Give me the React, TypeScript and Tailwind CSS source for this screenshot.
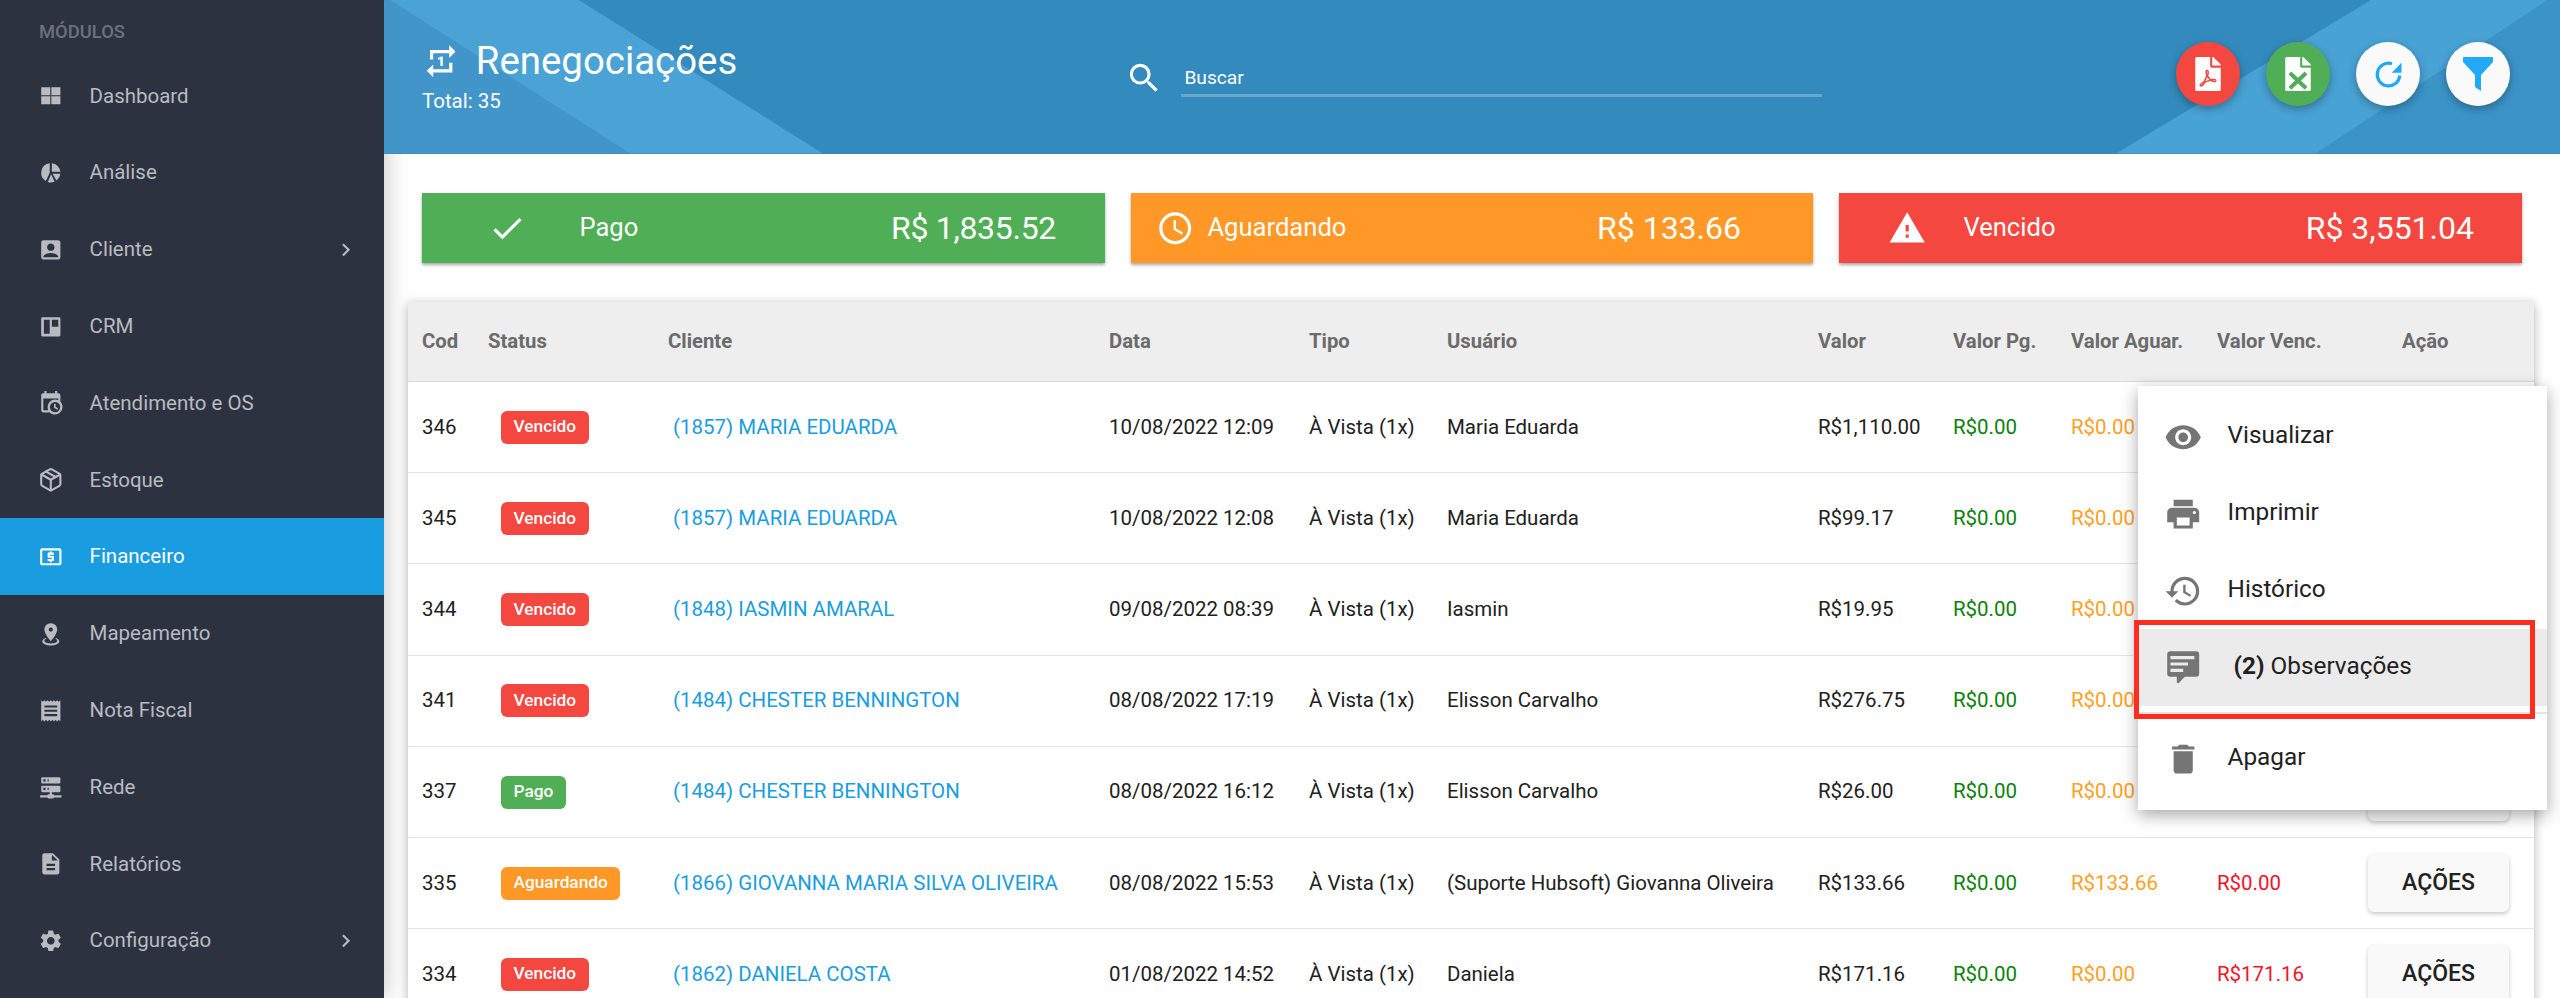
import { Package } from 'lucide-react';
import { FaFilePdf } from 'react-icons/fa';
import {
  MdAccessTime,
  MdAccountBox,
  MdCheck,
  MdChevronRight,
  MdDelete,
  MdDescription,
  MdHistory,
  MdLocalAtm,
  MdPrint,
  MdReceipt,
  MdRepeatOne,
  MdSearch,
  MdSettings,
  MdVisibility,
  MdWarning,
} from 'react-icons/md';
import type { ReactNode } from 'react';

const Svg = ({ d, className, evenOdd }: { d: string; className?: string; evenOdd?: boolean }) => (
  <svg viewBox="0 0 24 24" className={className} fill="currentColor">
    <path d={d} fillRule={evenOdd ? 'evenodd' : 'nonzero'} />
  </svg>
);

const navIcon = 'w-[25.6px] h-[25.6px] shrink-0';

const nav: { label: string; icon: ReactNode; arrow?: boolean; active?: boolean }[] = [
  { label: 'Dashboard', icon: <Svg className={navIcon} d="M3 4h8.5v7.5H3z M12.5 4H21v7.5h-8.5z M3 12.5h8.5V20H3z M12.5 12.5H21V20h-8.5z" /> },
  { label: 'Análise', icon: <Svg className={navIcon} d="M13 3.05V11h7.95A9 9 0 0 0 13 3.05z M11 3.05A9 9 0 0 0 7.4 19.7L11 12z M9.2 20.6a9 9 0 0 0 6.4-.3L12.3 13.3z M17.2 19.3A9 9 0 0 0 20.9 13h-7.2z" /> },
  { label: 'Cliente', icon: <MdAccountBox className={navIcon} />, arrow: true },
  { label: 'CRM', icon: <Svg className={navIcon} evenOdd d="M4 3h16a1 1 0 0 1 1 1v16a1 1 0 0 1-1 1H4a1 1 0 0 1-1-1V4a1 1 0 0 1 1-1z M5.5 5.5v13H11v-13z M13 5.5V12h6V5.5z" /> },
  { label: 'Atendimento e OS', icon: <Svg className={navIcon} d="M15,13H16.5V15.82L18.94,17.23L18.19,18.53L15,16.69V13M19,8H5V19H9.67C9.24,18.09 9,17.07 9,16A7,7 0 0,1 16,9C17.07,9 18.09,9.24 19,9.67V8M5,21C3.89,21 3,20.1 3,19V5C3,3.89 3.89,3 5,3H6V1H8V3H16V1H18V3H19A2,2 0 0,1 21,5V11.1C22.24,12.36 23,14.09 23,16A7,7 0 0,1 16,23C14.09,23 12.36,22.24 11.1,21H5M16,11.15A4.85,4.85 0 0,0 11.15,16C11.15,18.68 13.32,20.85 16,20.85A4.85,4.85 0 0,0 20.85,16C20.85,13.32 18.68,11.15 16,11.15Z" /> },
  { label: 'Estoque', icon: <Package className={navIcon} strokeWidth={2} /> },
  { label: 'Financeiro', icon: <MdLocalAtm className={navIcon} />, active: true },
  { label: 'Mapeamento', icon: <Svg className={navIcon} d="M12,2C15.31,2 18,4.66 18,7.95C18,12.41 12,19 12,19C12,19 6,12.41 6,7.95C6,4.66 8.69,2 12,2M12,6A2,2 0 0,0 10,8A2,2 0 0,0 12,10A2,2 0 0,0 14,8A2,2 0 0,0 12,6M20,19C20,21.21 16.42,23 12,23C7.58,23 4,21.21 4,19C4,17.71 5.22,16.56 7.11,15.83L7.75,16.74C6.67,17.19 6,17.81 6,18.5C6,19.88 8.69,21 12,21C15.31,21 18,19.88 18,18.5C18,17.81 17.33,17.19 16.25,16.74L16.89,15.83C18.78,16.56 20,17.71 20,19Z" /> },
  { label: 'Nota Fiscal', icon: <MdReceipt className={navIcon} /> },
  { label: 'Rede', icon: <Svg className={navIcon} d="M13,19H14A1,1 0 0,1 15,20H22V22H15A1,1 0 0,1 14,23H10A1,1 0 0,1 9,22H2V20H9A1,1 0 0,1 10,19H11V17H4A1,1 0 0,1 3,16V12A1,1 0 0,1 4,11H20A1,1 0 0,1 21,12V16A1,1 0 0,1 20,17H13V19M4,3H20A1,1 0 0,1 21,4V8A1,1 0 0,1 20,9H4A1,1 0 0,1 3,8V4A1,1 0 0,1 4,3M9,7H10V5H9V7M9,15H10V13H9V15M5,5V7H7V5H5M5,13V15H7V13H5Z" /> },
  { label: 'Relatórios', icon: <MdDescription className={navIcon} /> },
  { label: 'Configuração', icon: <MdSettings className={navIcon} />, arrow: true },
];

const statusColor: Record<string, string> = {
  Vencido: 'bg-[#f44740]',
  Pago: 'bg-[#50ae57]',
  Aguardando: 'bg-[#ff9826]',
};

const rows = [
  ['346', 'Vencido', '(1857) MARIA EDUARDA', '10/08/2022 12:09', 'Maria Eduarda', 'R$1,110.00', 'R$0.00', 'R$1,110.00'],
  ['345', 'Vencido', '(1857) MARIA EDUARDA', '10/08/2022 12:08', 'Maria Eduarda', 'R$99.17', 'R$0.00', 'R$99.17'],
  ['344', 'Vencido', '(1848) IASMIN AMARAL', '09/08/2022 08:39', 'Iasmin', 'R$19.95', 'R$0.00', 'R$19.95'],
  ['341', 'Vencido', '(1484) CHESTER BENNINGTON', '08/08/2022 17:19', 'Elisson Carvalho', 'R$276.75', 'R$0.00', 'R$276.75'],
  ['337', 'Pago', '(1484) CHESTER BENNINGTON', '08/08/2022 16:12', 'Elisson Carvalho', 'R$26.00', 'R$0.00', 'R$0.00'],
  ['335', 'Aguardando', '(1866) GIOVANNA MARIA SILVA OLIVEIRA', '08/08/2022 15:53', '(Suporte Hubsoft) Giovanna Oliveira', 'R$133.66', 'R$133.66', 'R$0.00'],
  ['334', 'Vencido', '(1862) DANIELA COSTA', '01/08/2022 14:52', 'Daniela', 'R$171.16', 'R$0.00', 'R$171.16'],
];

const cols = 'grid grid-cols-[66px_180px_441px_200px_138px_371px_135px_118px_146px_151px_1fr] pl-[14px]';
const menuIcon = 'w-[38.4px] h-[38.4px] text-[#757575] shrink-0';

const menu: { label: ReactNode; icon: ReactNode; active?: boolean }[] = [
  { label: 'Visualizar', icon: <MdVisibility className={menuIcon} /> },
  { label: 'Imprimir', icon: <MdPrint className={menuIcon} /> },
  { label: 'Histórico', icon: <MdHistory className={menuIcon} /> },
  {
    label: <span className="pl-[6px]"><b className="font-bold">(2)</b> Observações</span>,
    icon: <Svg className={menuIcon} evenOdd d="M4 2h16a2 2 0 0 1 2 2v12a2 2 0 0 1-2 2h-7l-3.6 3.7a.8.8 0 0 1-1.4-.6V18H4a2 2 0 0 1-2-2V4a2 2 0 0 1 2-2z M4 5v2h15V5z M4 9v2h11V9z M4 13v2h8v-2z" />,
    active: true,
  },
];

const App = () => {
  return (
    <div className="relative flex h-screen overflow-hidden bg-white font-['Roboto',sans-serif] text-[#212121]">
      {/* Sidebar */}
      <aside className="relative z-[1] w-[384px] shrink-0 bg-[#2d3240] text-[#b9bbc0] shadow-[0_0_24px_rgba(0,0,0,0.25)]">
        <div className="h-[57.6px] pl-[39px] pt-[20px] text-[18.4px] font-medium leading-[24px] text-[#6e717b]">MÓDULOS</div>
        {nav.map((item) => (
          <div
            key={item.label}
            className={`flex h-[76.8px] items-center pl-[38.4px] pr-[25px] ${item.active ? 'bg-[#1a9de0] text-white' : ''}`}
          >
            {item.icon}
            <span className="ml-[25.6px] flex-1 text-[20.48px]">{item.label}</span>
            {item.arrow && <MdChevronRight className="h-[25.6px] w-[25.6px]" />}
          </div>
        ))}
      </aside>

      <div className="flex min-w-0 flex-1 flex-col">
        {/* Header */}
        <header className="relative z-[2] flex h-[153.6px] shrink-0 items-start overflow-hidden bg-[#338abc] pl-[38px] text-white">
          <svg className="absolute inset-0 h-full w-full" viewBox="0 0 2176 154" preserveAspectRatio="none">
            <polygon points="0,0 6,0 246,154 0,154" fill="#4195c9" />
            <polygon points="6,0 195,0 439,154 246,154" fill="#4aa3d4" />
            <polygon points="1987,0 2164,0 1932,154 1732,154" fill="#48a2d3" />
            <polygon points="2164,0 2176,0 2176,154 1932,154" fill="#3b93c6" />
          </svg>
          <div className="relative w-[703px] pt-[41px]">
            <div className="flex h-[40px] items-center">
              <MdRepeatOne className="h-[38.4px] w-[38.4px]" />
              <h1 className="ml-[15.4px] text-[38.4px] leading-none">Renegociações</h1>
            </div>
            <div className="mt-[8px] text-[20.48px] leading-[24px]">Total: 35</div>
          </div>
          <div className="relative mt-[58px] flex items-start">
            <MdSearch className="mt-[1px] h-[38.4px] w-[38.4px]" />
            <div className="ml-[18px] h-[39px] w-[641px] border-b-[3.2px] border-white/25 pl-[3px] text-[19.2px] leading-[39px]">Buscar</div>
          </div>
          <div className="relative ml-[354px] mt-[42px] flex gap-[26px]">
            <button className="flex h-[64px] w-[64px] items-center justify-center rounded-full bg-[#f44740] text-white shadow-[0_3px_8px_rgba(0,0,0,0.3)]">
              <FaFilePdf className="h-[34px] w-[26px]" />
            </button>
            <button className="flex h-[64px] w-[64px] items-center justify-center rounded-full bg-[#50ae57] text-white shadow-[0_3px_8px_rgba(0,0,0,0.3)]">
              <svg viewBox="0 0 384 512" className="h-[34px] w-[26px]">
                <path fill="#ffffff" d="M224 136V0H24C10.7 0 0 10.7 0 24v464c0 13.3 10.7 24 24 24h336c13.3 0 24-10.7 24-24V160H248c-13.2 0-24-10.8-24-24z M384 121.9v6.1H256V0h6.1c6.4 0 12.5 2.5 17 7l97.9 98c4.5 4.5 7 10.6 7 16.9z" />
                <path fill="none" stroke="#50ae57" strokeWidth="60" d="M70 240 L314 470 M314 240 L70 470" />
              </svg>
            </button>
            <button className="flex h-[64px] w-[64px] items-center justify-center rounded-full bg-[#fafafa] text-[#20a9f4] shadow-[0_3px_8px_rgba(0,0,0,0.3)]">
              <svg viewBox="-16 -16 32 32" className="h-[32px] w-[32px]">
                <path fill="none" stroke="currentColor" strokeWidth="3.2" d="M4 -10.2 A11.3 11.3 0 1 0 11.8 1.5" />
                <polygon fill="currentColor" points="3.7,-1.3 13.5,-1.3 13.5,-11.3" />
              </svg>
            </button>
            <button className="flex h-[64px] w-[64px] items-center justify-center rounded-full bg-[#fafafa] text-[#20a9f4] shadow-[0_3px_8px_rgba(0,0,0,0.3)]">
              <svg viewBox="0 0 30 34" className="h-[34px] w-[30px]" fill="currentColor">
                <polygon points="0,0 30,0 30,5 18,18 18,34 12,30 12,18 0,5" />
              </svg>
            </button>
          </div>
        </header>

        {/* Totals */}
        <div className="flex gap-[26px] px-[38px] pt-[39px] text-white">
          <div className="flex h-[70.4px] w-[683px] items-center bg-[#50ae57] pl-[66px] pr-[49px] shadow-[0_2px_3px_rgba(0,0,0,0.35)]">
            <MdCheck className="h-[38.4px] w-[38.4px]" />
            <span className="ml-[53px] flex-1 pb-[2px] text-[25.6px]">Pago</span>
            <span className="text-[32px] tracking-[-0.3px]">R$ 1,835.52</span>
          </div>
          <div className="flex h-[70.4px] w-[682px] items-center bg-[#ff9826] pl-[25px] pr-[72px] shadow-[0_2px_3px_rgba(0,0,0,0.35)]">
            <MdAccessTime className="h-[38.4px] w-[38.4px]" />
            <span className="ml-[13px] flex-1 pb-[2px] text-[25.6px]">Aguardando</span>
            <span className="text-[32px]">R$ 133.66</span>
          </div>
          <div className="flex h-[70.4px] w-[683px] items-center bg-[#f44740] pl-[49px] pr-[48px] shadow-[0_2px_3px_rgba(0,0,0,0.35)]">
            <MdWarning className="h-[38.4px] w-[38.4px]" />
            <span className="ml-[37px] flex-1 pb-[2px] text-[25.6px]">Vencido</span>
            <span className="text-[32px]">R$ 3,551.04</span>
          </div>
        </div>

        {/* Table */}
        <div className="relative ml-[24px] mr-[26px] mt-[39px] bg-white shadow-[0_2px_10px_rgba(0,0,0,0.3)]">
          <div className={`${cols} h-[80px] items-center border-b-[1.6px] border-[#d8d8d8] bg-[#eeeeee] text-[20.3px] font-bold text-[#6b6b6b]`}>
            <span>Cod</span>
            <span>Status</span>
            <span>Cliente</span>
            <span>Data</span>
            <span>Tipo</span>
            <span>Usuário</span>
            <span>Valor</span>
            <span>Valor Pg.</span>
            <span>Valor Aguar.</span>
            <span>Valor Venc.</span>
            <span className="pl-[34px]">Ação</span>
          </div>
          {rows.map((r) => (
            <div key={r[0]} className={`${cols} h-[91.2px] items-center border-b-[1.6px] border-[#e4e4e4] text-[20.48px]`}>
              <span>{r[0]}</span>
              <span className="pl-[13px]">
                <span className={`inline-flex h-[33px] items-center rounded-[6px] px-[12.5px] text-[17.3px] font-medium text-white ${statusColor[r[1]]}`}>{r[1]}</span>
              </span>
              <span className="pl-[5px] text-[#1a9de0]">{r[2]}</span>
              <span>{r[3]}</span>
              <span>À Vista (1x)</span>
              <span>{r[4]}</span>
              <span>{r[5]}</span>
              <span className="text-[#0a820a]">R$0.00</span>
              <span className="text-[#ffa024]">{r[6]}</span>
              <span className="text-[#f8112b]">{r[7]}</span>
              <button className="h-[58px] w-[141px] rounded-[6px] bg-[#f9f9f9] text-[23px] font-medium shadow-[0_2px_4px_rgba(0,0,0,0.22)]">AÇÕES</button>
            </div>
          ))}
        </div>
      </div>

      {/* Actions menu */}
      <div className="absolute left-[2138px] top-[386px] z-10 w-[409px] bg-white py-[12.8px] text-[24.32px] text-[#212121] shadow-[0_5px_16px_rgba(0,0,0,0.35)]">
        {menu.map((m, i) => (
          <div key={i} className={`flex h-[76.8px] items-center pl-[25.6px] ${m.active ? 'bg-[#ebebeb]' : ''}`}>
            {m.icon}
            <span className="ml-[25.6px] pb-[3px]">{m.label}</span>
          </div>
        ))}
        <div className="my-[6.4px] h-[1.6px] bg-[#e4e4e4]" />
        <div className="flex h-[76.8px] items-center pl-[25.6px]">
          <MdDelete className={menuIcon} />
          <span className="ml-[25.6px] pb-[3px]">Apagar</span>
        </div>
      </div>

      {/* Highlight box */}
      <div className="absolute left-[2134px] top-[620px] z-20 h-[99px] w-[401px] border-[5px] border-[#ff2d20]" />
    </div>
  );
};

export default App;
